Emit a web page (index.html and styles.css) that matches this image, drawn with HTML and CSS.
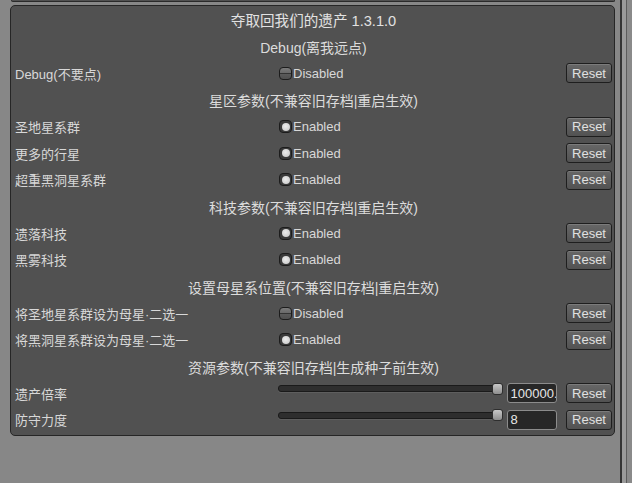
FILE: index.html
```html
<!DOCTYPE html>
<html lang="zh">
<head>
<meta charset="utf-8">
<link rel="stylesheet" href="styles.css">
</head>
<body>
<div class="main">
  <div class="topbox"></div>
  <div class="panel">
    <div class="head title">夺取回我们的遗产 1.3.1.0</div>
    <div class="head">Debug(离我远点)</div>
    <div class="row"><span class="label">Debug(不要点)</span><span class="ctl"><i class="tog off"></i>Disabled</span><span class="btn">Reset</span></div>
    <div class="head">星区参数(不兼容旧存档|重启生效)</div>
    <div class="row"><span class="label">圣地星系群</span><span class="ctl"><i class="tog on"></i>Enabled</span><span class="btn">Reset</span></div>
    <div class="row"><span class="label">更多的行星</span><span class="ctl"><i class="tog on"></i>Enabled</span><span class="btn">Reset</span></div>
    <div class="row"><span class="label">超重黑洞星系群</span><span class="ctl"><i class="tog on"></i>Enabled</span><span class="btn">Reset</span></div>
    <div class="head">科技参数(不兼容旧存档|重启生效)</div>
    <div class="row"><span class="label">遗落科技</span><span class="ctl"><i class="tog on"></i>Enabled</span><span class="btn">Reset</span></div>
    <div class="row"><span class="label">黑雾科技</span><span class="ctl"><i class="tog on"></i>Enabled</span><span class="btn">Reset</span></div>
    <div class="head">设置母星系位置(不兼容旧存档|重启生效)</div>
    <div class="row"><span class="label">将圣地星系群设为母星·二选一</span><span class="ctl"><i class="tog off"></i>Disabled</span><span class="btn">Reset</span></div>
    <div class="row"><span class="label">将黑洞星系群设为母星·二选一</span><span class="ctl"><i class="tog on"></i>Enabled</span><span class="btn">Reset</span></div>
    <div class="head">资源参数(不兼容旧存档|生成种子前生效)</div>
    <div class="row"><span class="label">遗产倍率</span><span class="ctl sl"><span class="slider"><span class="track"></span><span class="thumb"></span></span><span class="field">100000.</span></span><span class="btn">Reset</span></div>
    <div class="row"><span class="label">防守力度</span><span class="ctl sl"><span class="slider"><span class="track"></span><span class="thumb"></span></span><span class="field">8</span></span><span class="btn">Reset</span></div>
  </div>
</div>
<div class="scroll"><span class="s1"></span><span class="s2"></span><span class="s3"></span></div>
</body>
</html>
```

FILE: styles.css
```css
html, body {
  margin: 0;
  padding: 0;
}
body {
  width: 632px;
  height: 483px;
  overflow: hidden;
  background: #878787;
  display: flex;
  font-family: "Liberation Sans", "Noto Sans CJK SC", sans-serif;
  font-size: 13px;
  color: #d8d8d8;
}
.main {
  width: 620px;
}
.topbox {
  margin-left: 11px;
  width: 602px;
  height: 1px;
  box-sizing: content-box;
  background: #505050;
  border: 1px solid #2a2a2a;
  border-top: 0;
  border-radius: 0 0 3px 3px;
}
.panel {
  margin: 3px 0 0 10px;
  width: 605px;
  box-sizing: border-box;
  border: 1px solid #262626;
  border-radius: 5px;
  background: #515151;
  padding: 0.67px 2px 1.67px 4px;
  display: grid;
  grid-auto-rows: 26.667px;
}
.head {
  display: flex;
  align-items: center;
  justify-content: center;
  font-size: 14px;
  color: #dcdcdc;
}
.title {
  font-size: 14.6px;
  color: #e2e2e2;
}
.row {
  display: grid;
  grid-template-columns: 263px 288px 46px;
  align-items: center;
}
.label {
  white-space: nowrap;
}
.ctl {
  display: flex;
  align-items: center;
  padding-left: 1px;
}
.tog {
  width: 13px;
  height: 13px;
  box-sizing: border-box;
  border-radius: 4px;
  border: 1px solid #1c1c1c;
  margin-right: 1px;
  display: flex;
  align-items: center;
  justify-content: center;
}
.tog.off {
  background: linear-gradient(#7a7a7a 0, #6a6a6a 42%, #333 42%, #333 58%, #5a5a5a 58%, #4e4e4e 100%);
}
.tog.on {
  background: #3a3a3a;
}
.tog.on::after {
  content: "";
  width: 8px;
  height: 8px;
  border-radius: 50%;
  background: radial-gradient(circle at 45% 40%, #ececec, #c4c4c4);
}
.btn {
  height: 20px;
  box-sizing: border-box;
  border: 1px solid #1e1e1e;
  border-radius: 3px;
  background: linear-gradient(#676767, #525252);
  box-shadow: inset 0 1px 0 rgba(255, 255, 255, 0.14);
  display: flex;
  align-items: center;
  justify-content: center;
  color: #e0e0e0;
}
.ctl.sl {
  padding-left: 0;
  align-self: stretch;
  align-items: center;
}
.slider {
  align-self: flex-start;
  margin-top: 2.7px;
  display: flex;
  align-items: center;
  height: 12px;
}
.track {
  width: 217px;
  height: 7px;
  box-sizing: border-box;
  border: 1px solid #1a1a1a;
  border-radius: 3px;
  background: #2e2e2e;
  box-shadow: 0 1px 0 rgba(255, 255, 255, 0.08);
}
.thumb {
  width: 11px;
  height: 12px;
  box-sizing: border-box;
  margin-left: -3px;
  border: 1px solid #2e2e2e;
  border-radius: 3px;
  background: linear-gradient(#c8c8c8, #8e8e8e);
}
.field {
  margin-left: 4px;
  width: 50px;
  height: 20px;
  box-sizing: border-box;
  border: 1px solid #8c8c8c;
  border-radius: 3px;
  background: #272727;
  color: #e6e6e6;
  padding-left: 2.5px;
  display: flex;
  align-items: center;
  overflow: hidden;
  white-space: nowrap;
}
.scroll {
  width: 12px;
  display: flex;
}
.s1 {
  width: 2px;
  background: #343434;
}
.s2 {
  width: 5px;
  background: #9a9a9a;
}
.s3 {
  width: 5px;
  background: #8a8a8a;
  border-left: 1px solid #5c5c5c;
}
```
